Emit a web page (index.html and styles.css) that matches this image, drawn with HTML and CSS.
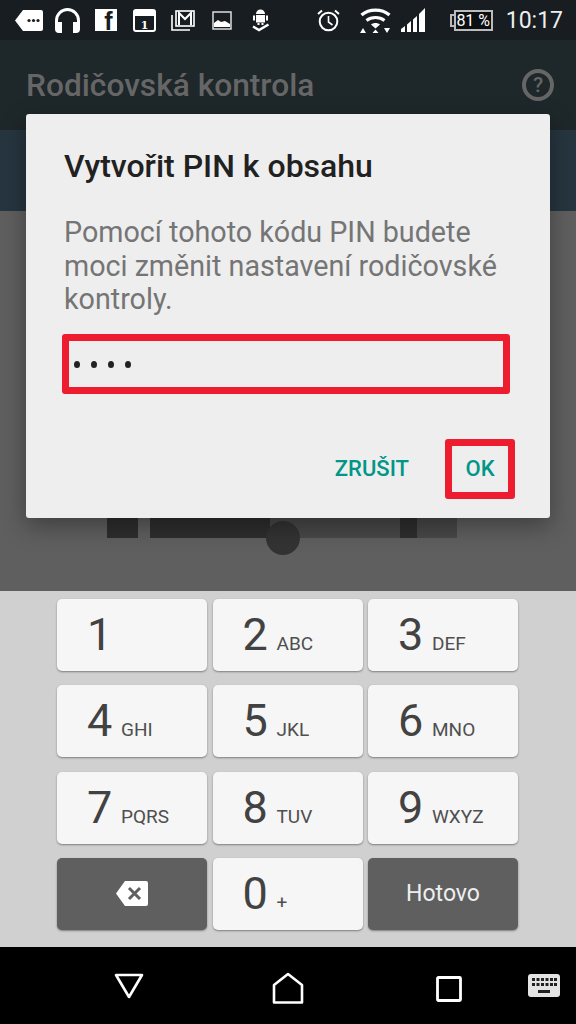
FILE: index.html
```html
<!DOCTYPE html>
<html lang="cs">
<head>
    <meta charset="UTF-8">
    <meta name="viewport" content="width=device-width, initial-scale=1.0">
    <title>Rodičovská kontrola</title>
    <link rel="stylesheet" href="styles.css">
</head>
<body>
    <div class="screen">
        <div class="status-bar">
            <div class="status-left">
                <span class="status-cell">
                    <svg width="28" height="21" viewBox="0 0 28 21"><path d="M8 0H26a2 2 0 0 1 2 2V19a2 2 0 0 1-2 2H8L0 10.5Z" fill="#fff"/><circle cx="14" cy="10.5" r="1.6" fill="#171d21"/><circle cx="18.5" cy="10.5" r="1.6" fill="#171d21"/><circle cx="23" cy="10.5" r="1.6" fill="#171d21"/></svg>
                </span>
                <span class="status-cell">
                    <svg width="27" height="26" viewBox="0 0 27 26"><path d="M2.500 18V13.500a11 11 0 0 1 22 0V18" fill="none" stroke="#fff" stroke-width="3"/><path d="M1 17.500Q1 15 4 15H8V26H5Q1 26 1 22ZM26 17.500Q26 15 23 15H19V26H22Q26 26 26 22Z" fill="#fff"/></svg>
                </span>
                <span class="status-cell fb-icon">
                    <span class="fb-letter">f</span>
                </span>
                <span class="status-cell">
                    <svg width="23" height="23" viewBox="0 0 23 23"><rect x="1" y="1" width="21" height="21" rx="2" fill="none" stroke="#fff" stroke-width="2"/><rect x="1" y="1" width="21" height="6" fill="#fff"/><text x="11.5" y="19.5" class="cal-letter">1</text></svg>
                </span>
                <span class="status-cell">
                    <svg width="24" height="21" viewBox="0 0 24 21"><path d="M1 5V20H19" fill="none" stroke="#fff" stroke-width="1.6"/><rect x="5" y="1" width="18" height="15" fill="none" stroke="#fff" stroke-width="1.6"/><path d="M8 15V3L14 9L20 3V15" fill="none" stroke="#fff" stroke-width="2"/></svg>
                </span>
                <span class="status-cell">
                    <svg width="20" height="19" viewBox="0 0 20 19"><rect x="1" y="1" width="18" height="17" fill="none" stroke="#ddd" stroke-width="1.5"/><path d="M2 16V12L6 9L9 11L13 10L18 13V16Z" fill="#fff"/></svg>
                </span>
                <span class="status-cell">
                    <svg width="19" height="23" viewBox="0 0 19 23"><path d="M5 5a4.500 4.500 0 0 1 9 0ZM5 6H14V13.500H5ZM2 6.500H4V11.500H2ZM15 6.500H17V11.500H15ZM6.500 14H8.500V16H6.500ZM10.500 14H12.500V16H10.500Z" fill="#fff"/><path d="M2 17.500L8 21L17.500 15.500" fill="none" stroke="#fff" stroke-width="2.500"/></svg>
                </span>
            </div>
            <div class="status-right">
                <svg class="icon-alarm" width="23" height="23" viewBox="0 0 23 23"><circle cx="11.5" cy="12.5" r="8.8" fill="none" stroke="#fff" stroke-width="2"/><path d="M11.5 7V13L15.5 16" fill="none" stroke="#fff" stroke-width="1.6"/><path d="M1 5L5 1.5M22 5L18 1.5" stroke="#fff" stroke-width="2"/></svg>
                <svg class="icon-wifi" width="31" height="25" viewBox="0 0 31 25"><path d="M1.500 7C9.500 0.500 21.500 0.500 29.500 7" fill="none" stroke="#fff" stroke-width="3.400"/><path d="M6.500 12.500C11.500 8.500 19.500 8.500 24.500 12.500" fill="none" stroke="#fff" stroke-width="3"/><path d="M11 16.500C13.500 14.500 17.500 14.500 20 16.500L15.500 20.500Z" fill="#fff"/><path d="M0 25H6L3 20ZM12.500 25H18.500L15.500 21.500ZM24 20H30L27 25Z" fill="#fff"/></svg>
                <svg class="icon-signal" width="24" height="24" viewBox="0 0 24 24"><path d="M0 24V21L4 18V24ZM6 24V16.500L10 13V24ZM12 24V11.500L16 8V24ZM18 24V6L24 0V24Z" fill="#fff"/></svg>
                <div class="battery">
                    <span class="battery-nub"></span>
                    <span class="battery-body">81 %</span>
                </div>
                <span class="clock">10:17</span>
            </div>
        </div>

        <div class="app-bar">
            <span class="app-title">Rodičovská kontrola</span>
            <span class="help-icon">?</span>
        </div>
        <div class="tab-strip"></div>

        <div class="content">
            <div class="slider">
                <span class="slider-seg seg-a"></span>
                <span class="slider-seg seg-b"></span>
                <span class="slider-seg seg-c"></span>
                <span class="slider-seg seg-tick"></span>
                <span class="slider-seg seg-d"></span>
                <span class="slider-thumb"></span>
            </div>
        </div>

        <div class="keyboard">
            <div class="key"><span class="digit">1</span></div>
            <div class="key"><span class="digit">2</span><span class="letters">ABC</span></div>
            <div class="key"><span class="digit">3</span><span class="letters">DEF</span></div>
            <div class="key"><span class="digit">4</span><span class="letters">GHI</span></div>
            <div class="key"><span class="digit">5</span><span class="letters">JKL</span></div>
            <div class="key"><span class="digit">6</span><span class="letters">MNO</span></div>
            <div class="key"><span class="digit">7</span><span class="letters">PQRS</span></div>
            <div class="key"><span class="digit">8</span><span class="letters">TUV</span></div>
            <div class="key"><span class="digit">9</span><span class="letters">WXYZ</span></div>
            <div class="key key-dark">
                <svg width="32" height="25" viewBox="0 0 32 25"><path d="M9 0H30a2 2 0 0 1 2 2V23a2 2 0 0 1-2 2H9L0 12.500Z" fill="#fff"/><path d="M13 7L24 18M24 7L13 18" stroke="#5f5f5f" stroke-width="3"/></svg>
            </div>
            <div class="key"><span class="digit">0</span><span class="letters">+</span></div>
            <div class="key key-dark"><span class="done">Hotovo</span></div>
        </div>

        <div class="nav-bar">
            <svg class="nav-back" width="30" height="26" viewBox="0 0 30 26"><path d="M2 2H28L15 24Z" fill="none" stroke="#fff" stroke-width="2.600" stroke-linejoin="round"/></svg>
            <svg class="nav-home" width="32" height="32" viewBox="0 0 32 32"><path d="M2 30.500V13L16 2L30 13V30.500Z" fill="none" stroke="#fff" stroke-width="2.600" stroke-linejoin="round"/></svg>
            <svg class="nav-recent" width="26" height="26" viewBox="0 0 26 26"><rect x="1.500" y="1.500" width="23" height="23" rx="1" fill="none" stroke="#fff" stroke-width="2.800"/></svg>
            <svg class="nav-keyboard" width="32" height="23" viewBox="0 0 32 23"><rect width="32" height="23" rx="3" fill="#e4e4e4"/><path d="M4 4h3v3H4ZM8.500 4h3v3h-3ZM13 4h3v3h-3ZM17.500 4h3v3h-3ZM22 4h3v3h-3ZM26 4h3v3h-3ZM4 9h3v3H4ZM8.500 9h3v3h-3ZM13 9h3v3h-3ZM17.500 9h3v3h-3ZM22 9h3v3h-3ZM26 9h3v3h-3ZM10 16h12v3H10Z" fill="#222"/></svg>
        </div>

        <div class="dialog">
            <h2 class="dialog-title">Vytvořit PIN k obsahu</h2>
            <p class="dialog-text">Pomocí tohoto kódu PIN budete moci změnit nastavení rodičovské kontroly.</p>
            <div class="pin-field">
                <span class="pin-dot"></span>
                <span class="pin-dot"></span>
                <span class="pin-dot"></span>
                <span class="pin-dot"></span>
            </div>
            <div class="dialog-actions">
                <span class="action">ZRUŠIT</span>
                <span class="action action-ok">OK</span>
            </div>
        </div>
    </div>
</body>
</html>
```

FILE: styles.css
```css
* {
    box-sizing: border-box;
}
body {
    margin: 0;
    font-family: Roboto, "Liberation Sans", sans-serif;
}
.screen {
    position: relative;
    width: 576px;
    height: 1024px;
    display: flex;
    flex-direction: column;
    overflow: hidden;
    background: #5f5f5f;
}

/* status bar */
.status-bar {
    height: 40px;
    flex-shrink: 0;
    background: #171d21;
    display: flex;
    align-items: center;
    justify-content: space-between;
    padding: 0 13px 0 10px;
}
.status-left {
    display: flex;
    align-items: center;
}
.status-cell {
    width: 38.5px;
    display: flex;
    justify-content: center;
}
.fb-letter {
    display: block;
    width: 22px;
    height: 22px;
    background: #fff;
    color: #171d21;
    font-family: "Liberation Sans", sans-serif;
    font-weight: 700;
    font-size: 25px;
    line-height: 25px;
    padding-left: 9px;
}
.cal-letter {
    font-family: "DejaVu Serif", serif;
    font-weight: 700;
    font-size: 11px;
    fill: #fff;
    text-anchor: middle;
}
.status-right {
    display: flex;
    align-items: center;
    color: #eee;
}
.icon-wifi {
    margin-left: 20px;
}
.icon-signal {
    margin-left: 10px;
}
.battery {
    display: flex;
    align-items: center;
    margin-left: 25px;
}
.battery-nub {
    width: 4px;
    height: 13px;
    border: 2px solid #bbb;
    border-right: none;
}
.battery-body {
    width: 39px;
    height: 21px;
    border: 2px solid #bbb;
    background: #0c0f11;
    color: #fff;
    font-size: 16px;
    line-height: 17px;
    text-align: center;
    white-space: nowrap;
}
.clock {
    margin-left: 13px;
    font-size: 23px;
}

/* dimmed page behind the dialog */
.app-bar {
    height: 90px;
    flex-shrink: 0;
    background: #1e272a;
    display: flex;
    align-items: center;
    justify-content: space-between;
    padding: 0 22px 0 26px;
}
.app-title {
    color: #666;
    font-size: 31.700px;
    font-weight: 500;
}
.help-icon {
    width: 32px;
    height: 32px;
    border: 4px solid #666;
    border-radius: 50%;
    color: #666;
    font-size: 21px;
    font-weight: 500;
    line-height: 24px;
    text-align: center;
}
.tab-strip {
    height: 81px;
    flex-shrink: 0;
    background: #26353f;
}
.content {
    height: 380px;
    flex-shrink: 0;
    padding-top: 287px;
    background: #5f5f5f;
}
.slider {
    position: relative;
    height: 40px;
    margin-left: 107px;
    width: 350px;
    display: flex;
}
.slider-seg {
    display: block;
    height: 100%;
}
.seg-a {
    width: 31px;
    background: #2e2e2e;
    margin-right: 12px;
}
.seg-b {
    width: 120px;
    background: #2e2e2e;
}
.seg-c {
    width: 130px;
    background: #484848;
}
.seg-tick {
    width: 17px;
    background: #2e2e2e;
}
.seg-d {
    width: 40px;
    background: #484848;
}
.slider-thumb {
    position: absolute;
    left: 159px;
    top: 23px;
    width: 34px;
    height: 34px;
    border-radius: 50%;
    background: #333;
}

/* keyboard */
.keyboard {
    height: 356px;
    flex-shrink: 0;
    background: #d0d0d0;
    display: grid;
    grid-template-columns: repeat(3, 150px);
    grid-auto-rows: 72px;
    gap: 14.300px 5.500px;
    padding: 8px 0 0 57px;
}
.key {
    background: #f6f6f6;
    border-radius: 5px;
    box-shadow: 0 1px 2px rgba(0, 0, 0, 0.4);
    display: flex;
    align-items: baseline;
    padding: 9px 0 0 30px;
    color: #424242;
}
.digit {
    width: 34px;
    font-size: 45px;
    line-height: 54px;
}
.letters {
    font-size: 19px;
    color: #4f4f4f;
}
.key-dark {
    background: #5f5f5f;
    align-items: center;
    justify-content: center;
    padding: 0;
}
.done {
    color: #eee;
    font-size: 23px;
}

/* navigation bar */
.nav-bar {
    height: 77px;
    flex-shrink: 0;
    background: #000;
    display: flex;
    align-items: center;
    padding-left: 114px;
}
.nav-back {
    margin-top: 1px;
}
.nav-home {
    margin-left: 128px;
    margin-top: 5px;
}
.nav-recent {
    margin-left: 132px;
    margin-top: 6px;
}
.nav-keyboard {
    margin-left: 66px;
}

/* dialog */
.dialog {
    position: absolute;
    left: 26px;
    top: 114px;
    width: 524px;
    height: 404px;
    background: #eee;
    border-radius: 3px;
    box-shadow: 0 8px 24px rgba(0, 0, 0, 0.35);
    padding: 33px 35px 0 38px;
}
.dialog-title {
    margin: 0;
    color: #212121;
    font-size: 32px;
    font-weight: 500;
    line-height: 38px;
}
.dialog-text {
    margin: 31px 0 0;
    color: #757575;
    font-size: 28.700px;
    line-height: 33.500px;
}
.pin-field {
    width: 448px;
    height: 60px;
    margin: 17px 0 0 -2px;
    border: 7px solid #ed1c2e;
    border-radius: 3px;
    display: flex;
    align-items: center;
    gap: 11px;
    padding: 2px 0 0 5px;
}
.pin-dot {
    width: 6px;
    height: 7px;
    border-radius: 50%;
    background: #222;
}
.dialog-actions {
    display: flex;
    justify-content: flex-end;
    align-items: center;
    margin-top: 45px;
    color: #009688;
    font-size: 22px;
    font-weight: 500;
}
.action-ok {
    width: 70px;
    height: 60px;
    margin-left: 36px;
    border: 7px solid #ed1c2e;
    border-radius: 3px;
    display: flex;
    align-items: center;
    justify-content: center;
}
```
